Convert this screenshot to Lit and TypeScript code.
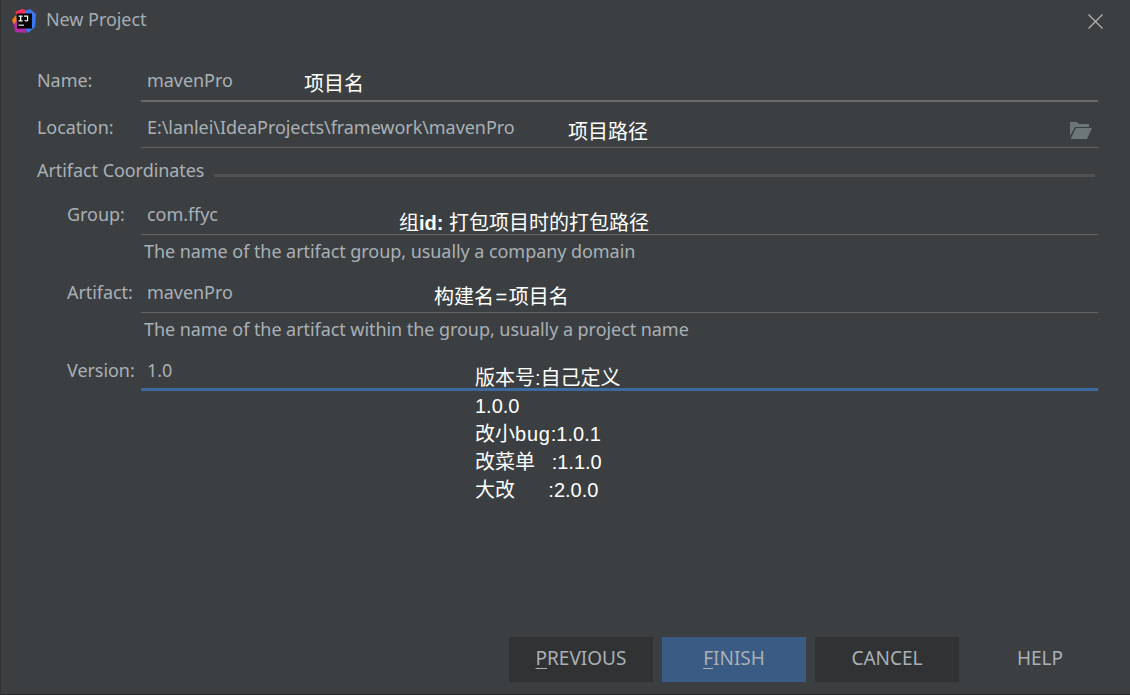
import { LitElement, html, css } from "lit";
import { customElement } from "lit/decorators.js";

@customElement("app-root")
export class AppRoot extends LitElement {
  static styles = css`
    :host {
      display: block;
      position: relative;
      width: 1130px;
      height: 695px;
      box-sizing: border-box;
      overflow: hidden;
      background: #3c3f41;
      border-left: 1px solid #323232;
      border-bottom: 1px solid #2b2b2b;
      font-family: "Noto Sans", "Open Sans", sans-serif;
      font-size: 18px;
      letter-spacing: -0.06px;
      color: #a9b0b6;
    }
    .titlebar { display: flex; align-items: center; height: 40px; padding: 0 26px 0 10px; gap: 9px; }
    .titlebar .title { flex: 1; line-height: 40px; color: #a5acb2; margin-top: -2px; }
    .logo { width: 26px; height: 26px; display: block; }
    .close { width: 17px; height: 17px; display: block; margin-top: 3px; }
    .form { display: flex; flex-direction: column; padding: 0 32px 0 36px; }
    .row { display: flex; align-items: stretch; }
    .row.name { height: 62px; }
    .row.loc { height: 46px; }
    .row .lbl { width: 104px; display: flex; align-items: flex-end; padding-bottom: 10px; box-sizing: border-box; line-height: 22px; }
    .row.name .lbl { padding-bottom: 11px; }
    .row.indent .lbl { width: 74px; }
    .row.indent { padding-left: 30px; }
    .field { flex: 1; display: flex; align-items: flex-end; justify-content: space-between; padding: 0 6px 9px 6px; border-bottom: 1px solid #646464; box-sizing: border-box; line-height: 22px; }
    .field.name-f { border-bottom-color: #6a6a6a; border-bottom-width: 2px; padding-bottom: 9px; }
    .field.focus { border-bottom: 3px solid #3d6a9e; padding-bottom: 7px; }
    .folder { width: 24px; height: 18px; display: block; margin-bottom: -1px; margin-right: -1px; }
    .sep { display: flex; align-items: center; gap: 10px; height: 47px; padding-right: 3px; margin-top: -1px; }
    .sep .line { flex: 1; height: 3px; background: #515151; margin-top: 9px; }
    .sep .txt { line-height: 22px; margin-top: -1px; }
    .row.group { height: 41px; }
    .row.artifact { height: 45px; }
    .row.version { height: 45px; }
    .hint { padding-left: 107px; height: 33px; line-height: 32px; white-space: nowrap; }
    .buttons { position: absolute; left: 508px; top: 637px; display: flex; gap: 9px; }
    .btn { width: 144px; height: 45px; display: flex; align-items: center; justify-content: center; font-size: 19px; letter-spacing: 0; color: #a9b0b6; background: #313233; box-sizing: border-box; padding-bottom: 3px; }
    .btn.primary { background: #3a5b84; }
    .btn.plain { background: transparent; }
    .btn u { text-underline-offset: 3px; }
    .note { position: absolute; color: #ffffff; font-family: "Liberation Sans", "Noto Sans CJK SC", sans-serif; font-size: 20px; letter-spacing: 0; line-height: 28px; white-space: pre; }
    .n1 { left: 303px; top: 70px; }
    .n2 { left: 567px; top: 118px; }
    .n3 { left: 398px; top: 209px; }
    .n4 { left: 433px; top: 283px; }
    .n5 { left: 474px; top: 364px; }
    .bold { font-weight: 700; }
    .eq { margin: 0 1.5px; }
    .bug { letter-spacing: 0.8px; }
  `;

  render() {
    return html`
      <div class="titlebar">
        <svg class="logo" viewBox="0 0 26 26">
          <path d="M4 5 L11 2 L17 4 L13 9 L6 8 Z" fill="#fe315d" />
          <path d="M1 13 L5 8 L6 18 L3 18 Z" fill="#f97a12" />
          <path d="M14 4 L19 2 L25 7 L24 20 L17 26 L13 21 Z" fill="#3b76f0" />
          <path d="M3 17 L7 13 L14 21 L15 26 L4 25 Z" fill="#b32ba5" />
          <rect x="6" y="6.5" width="15" height="15" fill="#000" />
          <path d="M7.5 8.5h4.2v1.2h-1.4v3.6h1.4v1.2H7.5v-1.2h1.4V9.7H7.5zM13 8.5h4.2v4.6c0 1-.7 1.5-1.8 1.5-.9 0-1.6-.3-2.1-1l.8-.8c.4.4.8.6 1.2.6.5 0 .7-.2.7-.7V9.7H13z" fill="#fff" />
          <rect x="7.5" y="17.6" width="5.5" height="1.1" fill="#fff" />
        </svg>
        <span class="title">New Project</span>
        <svg class="close" viewBox="0 0 17 17"><path d="M1.5 1.5 L15.5 15.5 M15.5 1.5 L1.5 15.5" stroke="#b2b2b2" stroke-width="1.3" fill="none" /></svg>
      </div>
      <div class="form">
        <div class="row name">
          <span class="lbl">Name:</span>
          <div class="field name-f"><span>mavenPro</span></div>
        </div>
        <div class="row loc">
          <span class="lbl">Location:</span>
          <div class="field">
            <span>E:\\lanlei\\IdeaProjects\\framework\\mavenPro</span>
            <svg class="folder" viewBox="0 0 24 18">
              <path d="M1 1 H8 L10 3 H20 V6 H6 L1 15 Z" fill="#6d7679" />
              <path d="M7 7 H23 L18 18 H1.5 Z" fill="#6d7679" />
            </svg>
          </div>
        </div>
        <div class="sep"><span class="txt">Artifact Coordinates</span><div class="line"></div></div>
        <div class="row indent group">
          <span class="lbl">Group:</span>
          <div class="field"><span>com.ffyc</span></div>
        </div>
        <div class="hint">The name of the artifact group, usually a company domain</div>
        <div class="row indent artifact">
          <span class="lbl">Artifact:</span>
          <div class="field"><span>mavenPro</span></div>
        </div>
        <div class="hint">The name of the artifact within the group, usually a project name</div>
        <div class="row indent version">
          <span class="lbl">Version:</span>
          <div class="field focus"><span>1.0</span></div>
        </div>
      </div>
      <div class="buttons">
        <div class="btn"><span><u>P</u>REVIOUS</span></div>
        <div class="btn primary"><span><u>F</u>INISH</span></div>
        <div class="btn"><span>CANCEL</span></div>
        <div class="btn plain"><span>HELP</span></div>
      </div>
      <div class="note n1">项目名</div>
      <div class="note n2">项目路径</div>
      <div class="note n3">组<span class="bold">id:</span> 打包项目时的打包路径</div>
      <div class="note n4">构建名<span class="eq">=</span>项目名</div>
      <div class="note n5">版本号:自己定义
1.0.0
改小<span class="bug">bug</span>:1.0.1
改菜单   :1.1.0
大改      :2.0.0</div>
    `;
  }
}
